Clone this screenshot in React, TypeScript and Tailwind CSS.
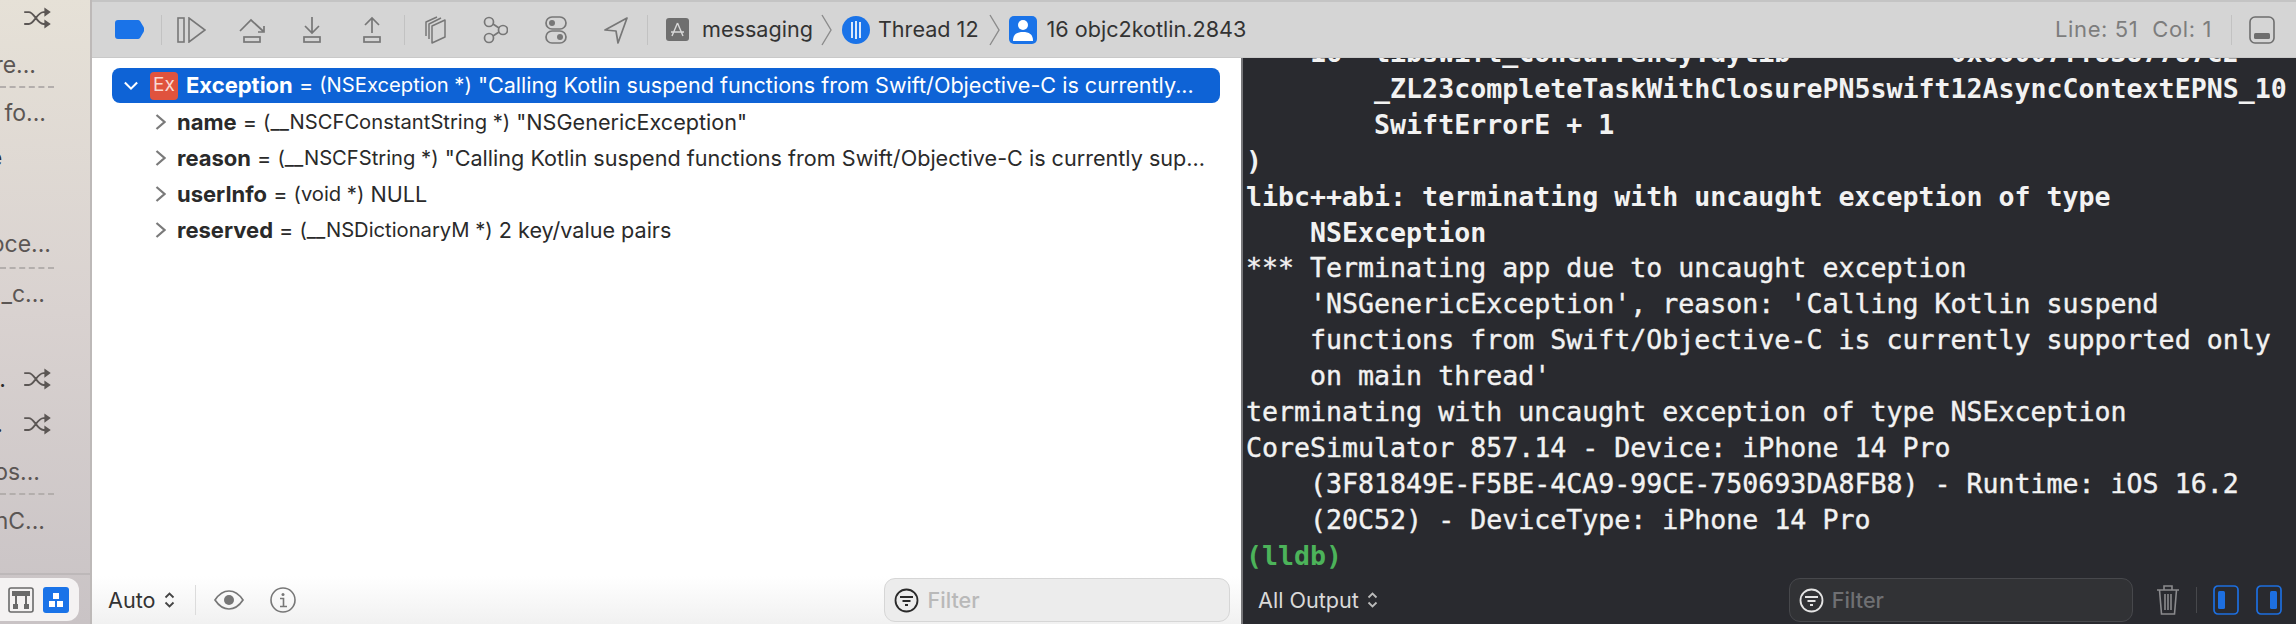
import React from "react";

const sf = "font-['Inter','Liberation_Sans',sans-serif]";

function Shuffle() {
  return (
    <svg width="29" height="22" viewBox="0 0 31 24" fill="none" className="shrink-0 text-[#5b5654]">
      <path d="M1 5.5h5c6 0 9 13 16 13h2M1 18.5h5c6 0 9-13 16-13h2" stroke="currentColor" strokeWidth="2" />
      <path d="M23 0.5l7 5-7 5zM23 13.5l7 5-7 5z" fill="currentColor" />
    </svg>
  );
}

function SideRow({ h = "h-10", className, children }: { h?: string; className: string; children?: React.ReactNode }) {
  return (
    <div className={`${h} ${className} flex items-center justify-end overflow-hidden whitespace-nowrap text-[23px] text-[#5b5654]`}>
      {children}
    </div>
  );
}

function Sidebar() {
  return (
    <aside className={`${sf} w-[92px] shrink-0 flex flex-col bg-gradient-to-b from-[#e6e1d7] via-[#d9d2d0] to-[#c9c3c5] border-r-2 border-[#bdb9b8]`}>
      <SideRow h="h-9" className="pr-[38px]"><Shuffle /></SideRow>
      <SideRow className="mt-[9px] pr-[54px]">re...</SideRow>
      <div className="mt-px h-px w-[54px] border-t-2 border-dashed border-[#b3aeac]" />
      <SideRow className="mt-[5px] pr-[44px]">fo...</SideRow>
      <SideRow className="mt-[5px] pr-[88px]"><span className="font-semibold text-[#2b2b2b]">e</span></SideRow>
      <SideRow className="mt-[46px] pr-[39px]">oce...</SideRow>
      <div className="mt-[3px] h-px w-[54px] border-t-2 border-dashed border-[#b3aeac]" />
      <SideRow className="mt-[5px] pr-[45px]">_c...</SideRow>
      <SideRow className="mt-[45px] pr-[38px]"><span className="mr-[17px] text-[#2b2b2b]">..</span><Shuffle /></SideRow>
      <SideRow className="mt-[5px] pr-[38px]"><span className="mr-[20px] text-[#2b2b2b]">.</span><Shuffle /></SideRow>
      <SideRow className="mt-[8px] pr-[50px]">os...</SideRow>
      <div className="mt-px h-px w-[54px] border-t-2 border-dashed border-[#b3aeac]" />
      <SideRow className="mt-[6px] pr-[45px]">nC...</SideRow>
      <div className="flex-1" />
      <div className="h-[51px] border-t-2 border-[#bdb8b9] pt-[3px]">
        <div className="h-[43px] w-[79px] rounded-r-[12px] bg-[#f4f2f2] flex items-center pl-2 gap-[9px]">
          <svg width="26" height="26" viewBox="0 0 26 26" fill="none" className="text-[#6a6a6a]">
            <rect x="1" y="1" width="24" height="24" rx="2" stroke="currentColor" strokeWidth="1.6" />
            <rect x="4" y="4" width="18" height="5" fill="currentColor" />
            <path d="M8 9v9M18 9v9" stroke="currentColor" strokeWidth="2" />
            <rect x="5" y="17" width="5" height="5" fill="currentColor" />
            <rect x="16" y="17" width="5" height="5" fill="currentColor" />
          </svg>
          <div className="w-[26px] h-[26px] rounded-[3px] bg-[#1a73e8] flex items-center justify-center">
            <svg width="16" height="15" viewBox="0 0 16 15" fill="#fff">
              <rect x="5" y="1" width="6" height="6" />
              <rect x="1" y="9" width="6" height="6" />
              <rect x="9" y="9" width="6" height="6" />
            </svg>
          </div>
        </div>
      </div>
    </aside>
  );
}

function Toolbar() {
  const g = "text-[#7d7d7d]";
  return (
    <header className={`${sf} h-[58px] flex items-center bg-[#d5d5d5] border-t-2 border-[#c4c4c4] border-b border-b-[#c9c9c9] text-[#333] text-[21.6px] whitespace-nowrap`}>
      <svg width="29" height="19" viewBox="0 0 29 19" className="ml-[23px] shrink-0">
        <path d="M3 0h20a3 3 0 0 1 2 1l3 5a6 6 0 0 1 0 7l-3 5a3 3 0 0 1-2 1H3a3 3 0 0 1-3-3V3a3 3 0 0 1 3-3z" fill="#1a73e8" />
      </svg>
      <div className="ml-[17px] h-[30px] w-px bg-[#c2c2c2]" />
      <svg width="29" height="26" viewBox="0 0 29 26" fill="none" stroke="#777" strokeWidth="1.6" className="ml-[15px] shrink-0">
        <rect x="1" y="1" width="6" height="24" />
        <path d="M12 1v24l16-12z" />
      </svg>
      <svg width="27" height="28" viewBox="0 0 27 28" fill="none" stroke="#777" strokeWidth="1.7" className="ml-[33px] shrink-0">
        <path d="M1 15L12 4l12 11M25 10v6h-6" />
        <rect x="5" y="21" width="16" height="5" />
      </svg>
      <svg width="18" height="28" viewBox="0 0 18 28" fill="none" stroke="#777" strokeWidth="1.7" className="ml-[37px] shrink-0">
        <path d="M9 1v15M2 10l7 7 7-7" />
        <rect x="1" y="21" width="16" height="5" />
      </svg>
      <svg width="18" height="28" viewBox="0 0 18 28" fill="none" stroke="#777" strokeWidth="1.7" className="ml-[42px] shrink-0">
        <path d="M9 17V2M2 9l7-7 7 7" />
        <rect x="1" y="21" width="16" height="5" />
      </svg>
      <div className="ml-[23px] h-[30px] w-px bg-[#c2c2c2]" />
      <svg width="22" height="28" viewBox="0 0 22 28" fill="none" stroke="#777" strokeWidth="1.5" strokeLinejoin="round" className="ml-[19px] shrink-0">
        <path d="M8 10l13-6v17l-13 6z" />
        <path d="M5 23V8l12-6" />
        <path d="M2 20V6l11-5" />
      </svg>
      <svg width="25" height="28" viewBox="0 0 25 28" fill="none" stroke="#777" strokeWidth="1.7" className="ml-[37px] shrink-0">
        <circle cx="6" cy="6" r="4.5" />
        <circle cx="20" cy="14" r="4.5" />
        <circle cx="6" cy="22" r="4.5" />
        <path d="M10 8l6 4M10 20l6-4" />
      </svg>
      <svg width="22" height="28" viewBox="0 0 22 28" fill="none" className="ml-[37px] shrink-0">
        <rect x="1" y="1" width="20" height="12" rx="6" stroke="#777" strokeWidth="1.7" />
        <circle cx="7" cy="7" r="3" fill="#777" />
        <rect x="1" y="15" width="20" height="12" rx="6" stroke="#777" strokeWidth="1.7" />
        <circle cx="15" cy="21" r="3" fill="#777" />
      </svg>
      <svg width="24" height="28" viewBox="0 0 24 28" fill="none" stroke="#777" strokeWidth="1.7" strokeLinejoin="round" className="ml-[37px] shrink-0">
        <path d="M23 2L1 14l11 1 2 12z" />
      </svg>
      <div className="ml-[19px] h-[30px] w-px bg-[#c2c2c2]" />
      <div className="ml-[18px] w-[23px] h-[23px] rounded-[3px] bg-[#6f6f6f] flex items-center justify-center shrink-0">
        <svg width="15" height="15" viewBox="0 0 15 15" fill="none" stroke="#d8d8d8" strokeWidth="1.4">
          <path d="M7.5 1L2 14M7.5 1L13 14M1 10h13" />
        </svg>
      </div>
      <span className="ml-[13px]">messaging</span>
      <svg width="11" height="38" viewBox="0 0 11 38" fill="none" stroke="#8b8b8b" strokeWidth="1.4" className="ml-[8px] shrink-0">
        <path d="M1 4l9 15-9 15" />
      </svg>
      <div className="ml-[10px] w-[28px] h-[28px] rounded-full bg-[#1a73e8] flex items-center justify-center gap-[2px] shrink-0">
        <span className="w-[2px] h-[16px] bg-[#dbe8fb]" />
        <span className="w-[2px] h-[18px] bg-[#dbe8fb]" />
        <span className="w-[2px] h-[16px] bg-[#dbe8fb]" />
      </div>
      <span className="ml-[8px]">Thread 12</span>
      <svg width="11" height="38" viewBox="0 0 11 38" fill="none" stroke="#8b8b8b" strokeWidth="1.4" className="ml-[10px] shrink-0">
        <path d="M1 4l9 15-9 15" />
      </svg>
      <div className="ml-[9px] w-[28px] h-[28px] rounded-[5px] bg-[#1a73e8] overflow-hidden flex items-center justify-center shrink-0">
        <svg width="20" height="22" viewBox="0 0 20 22" fill="#fff">
          <circle cx="10" cy="6" r="5" />
          <path d="M0 22c0-7 4-9 10-9s10 2 10 9z" />
        </svg>
      </div>
      <span className="ml-[10px]">16 objc2kotlin.2843</span>
      <div className="flex-1" />
      <span className={`${g} text-[22px] tracking-[0.6px]`}>Line: 51</span>
      <span className={`${g} text-[22px] tracking-[0.6px] ml-[14px]`}>Col: 1</span>
      <div className="ml-[19px] h-[30px] w-px bg-[#c2c2c2]" />
      <svg width="26" height="28" viewBox="0 0 26 28" fill="none" className="ml-[17px] mr-[21px] shrink-0">
        <rect x="1" y="1" width="24" height="26" rx="5" stroke="#6e6e6e" strokeWidth="1.6" />
        <rect x="5" y="17" width="16" height="6" rx="1.5" fill="#6e6e6e" />
      </svg>
    </header>
  );
}

function Chevron() {
  return (
    <svg width="11" height="18" viewBox="0 0 11 18" fill="none" stroke="#7a7a7a" strokeWidth="2.2" className="ml-[63px] mr-[11px] shrink-0">
      <path d="M1.5 2l8 7-8 7" />
    </svg>
  );
}

function VarRow({ name, type, value }: { name: string; type: string; value: string }) {
  return (
    <div className="h-9 flex items-center whitespace-nowrap text-[21.6px] text-[#2a2a2a]">
      <Chevron />
      <span className="font-bold text-[22px]">{name}</span>
      <span>&nbsp;=&nbsp;</span>
      <span className="text-[20.2px]">{type}</span>
      <span>&nbsp;{value}</span>
    </div>
  );
}

function VariablesPane() {
  return (
    <section className={`${sf} w-[1149px] shrink-0 flex flex-col bg-white`}>
      <div className="flex-1 pt-[10px]">
        <div className="ml-[20px] mb-px w-[1108px] h-[35px] rounded-[8px] bg-[#0e63d6] flex items-center whitespace-nowrap text-[21.6px] text-white">
          <svg width="14" height="10" viewBox="0 0 16 10" fill="none" stroke="#fff" strokeWidth="2.4" className="ml-[12px] shrink-0">
            <path d="M1 1l7 7 7-7" />
          </svg>
          <span className="ml-[12px] w-[28px] h-[28px] rounded-[4px] bg-[#e0533d] text-[#f9d9d2] text-[19px] flex items-center justify-center shrink-0">Ex</span>
          <span className="ml-[8px] font-bold text-[22px]">Exception</span>
          <span>&nbsp;=&nbsp;</span>
          <span className="text-[20.2px]">(NSException *)</span>
          <span>&nbsp;"Calling Kotlin suspend functions from Swift/Objective-C is currently...</span>
        </div>
        <VarRow name="name" type="(__NSCFConstantString *)" value={'"NSGenericException"'} />
        <VarRow name="reason" type="(__NSCFString *)" value={'"Calling Kotlin suspend functions from Swift/Objective-C is currently sup...'} />
        <VarRow name="userInfo" type="(void *)" value="NULL" />
        <VarRow name="reserved" type="(__NSDictionaryM *)" value="2 key/value pairs" />
      </div>
      <footer className="h-[48px] flex items-center bg-gradient-to-b from-white to-[#f1f1f1] text-[#333] text-[21.6px]">
        <span className="ml-[16px]">Auto</span>
        <UpDown className="ml-[9px] text-[#444]" />
        <div className="ml-[20px] h-[30px] w-px bg-[#dcdcdc]" />
        <svg width="30" height="20" viewBox="0 0 30 20" fill="none" className="ml-[18px] shrink-0">
          <path d="M1 10c4-6 9-9 14-9s10 3 14 9c-4 6-9 9-14 9S5 16 1 10z" stroke="#777" strokeWidth="1.7" />
          <circle cx="15" cy="10" r="5" fill="#777" />
        </svg>
        <svg width="26" height="26" viewBox="0 0 26 26" fill="none" className="ml-[26px] shrink-0">
          <circle cx="13" cy="13" r="12" stroke="#777" strokeWidth="1.6" />
          <circle cx="13" cy="7.5" r="1.5" fill="#777" />
          <path d="M10 11.5h3.5v8M10 19.5h7" stroke="#777" strokeWidth="1.6" />
        </svg>
        <div className="ml-[588px] w-[346px] h-[44px] rounded-[11px] border border-[#d6d6d6] bg-[#ececec] flex items-center">
          <FilterIcon color="#2a2a2a" />
          <span className="ml-[8px] text-[#b9b9b9] font-medium">Filter</span>
        </div>
      </footer>
    </section>
  );
}

function UpDown({ className }: { className: string }) {
  return (
    <svg width="11" height="16" viewBox="0 0 11 16" fill="none" stroke="currentColor" strokeWidth="1.8" className={`${className} shrink-0`}>
      <path d="M1.5 5.5l4-4 4 4M1.5 10.5l4 4 4-4" />
    </svg>
  );
}

function FilterIcon({ color }: { color: string }) {
  return (
    <svg width="25" height="25" viewBox="0 0 25 25" fill="none" stroke={color} strokeWidth="1.8" className="ml-[9px] shrink-0">
      <circle cx="12.5" cy="12.5" r="11" />
      <path d="M6 9h13M8.5 13h8M11 17h3" />
    </svg>
  );
}

const lines: { t: string; b?: boolean }[] = [
  { t: "    16  libswift_Concurrency.dylib          0x00007ff8387787c2", b: true },
  { t: "        _ZL23completeTaskWithClosurePN5swift12AsyncContextEPNS_10", b: true },
  { t: "        SwiftErrorE + 1", b: true },
  { t: ")", b: true },
  { t: "libc++abi: terminating with uncaught exception of type", b: true },
  { t: "    NSException", b: true },
  { t: "*** Terminating app due to uncaught exception" },
  { t: "    'NSGenericException', reason: 'Calling Kotlin suspend" },
  { t: "    functions from Swift/Objective-C is currently supported only" },
  { t: "    on main thread'" },
  { t: "terminating with uncaught exception of type NSException" },
  { t: "CoreSimulator 857.14 - Device: iPhone 14 Pro" },
  { t: "    (3F81849E-F5BE-4CA9-99CE-750693DA8FB8) - Runtime: iOS 16.2" },
  { t: "    (20C52) - DeviceType: iPhone 14 Pro" },
];

function ConsolePane() {
  return (
    <section className="flex-1 min-w-0 flex flex-col bg-[#292a2f] border-l-2 border-[#77777a]">
      <div className="flex-1 min-h-0 overflow-hidden pl-[3px] font-['DejaVu_Sans_Mono',monospace] text-[26.6px] leading-[35.9px] text-[#f2f2f2] whitespace-pre">
        <div className="-mt-[23px]">
          {lines.map((l, i) => (
            <div key={i} className={l.b ? "font-bold" : "font-normal [-webkit-text-stroke:0.4px_#f2f2f2]"}>{l.t}</div>
          ))}
          <div className="font-bold text-[#4cb35a]">(lldb)</div>
        </div>
      </div>
      <footer className={`${sf} h-[48px] shrink-0 flex items-center text-[21.6px] text-[#d9d9d9]`}>
        <span className="ml-[15px]">All Output</span>
        <UpDown className="ml-[8px] text-[#bbb]" />
        <div className="ml-[411px] w-[344px] h-[44px] rounded-[11px] border border-[#47484c] bg-[#313235] flex items-center">
          <FilterIcon color="#e4e4e4" />
          <span className="ml-[8px] text-[#6f7073] font-medium">Filter</span>
        </div>
        <svg width="24" height="32" viewBox="0 0 24 32" fill="none" stroke="#8a8a8d" strokeWidth="1.6" className="ml-[23px] shrink-0">
          <path d="M1 6h22M8 6V2h8v4M3.5 6l2 24h13l2-24M9 10v16M12 10v16M15 10v16" />
        </svg>
        <div className="ml-[16px] h-[26px] w-px bg-[#47484c]" />
        <svg width="26" height="30" viewBox="0 0 26 30" fill="none" className="ml-[16px] shrink-0">
          <rect x="1" y="1" width="24" height="28" rx="4" stroke="#1d6fe0" strokeWidth="1.7" />
          <rect x="5" y="6" width="7" height="18" rx="1.5" fill="#1d6fe0" />
        </svg>
        <svg width="26" height="30" viewBox="0 0 26 30" fill="none" className="ml-[17px] shrink-0">
          <rect x="1" y="1" width="24" height="28" rx="4" stroke="#1d6fe0" strokeWidth="1.7" />
          <rect x="14" y="6" width="7" height="18" rx="1.5" fill="#1d6fe0" />
        </svg>
      </footer>
    </section>
  );
}

export default function App() {
  return (
    <div className="w-[2296px] h-[624px] flex overflow-hidden bg-white">
      <Sidebar />
      <div className="flex-1 min-w-0 flex flex-col">
        <Toolbar />
        <div className="flex-1 min-h-0 flex">
          <VariablesPane />
          <ConsolePane />
        </div>
      </div>
    </div>
  );
}
